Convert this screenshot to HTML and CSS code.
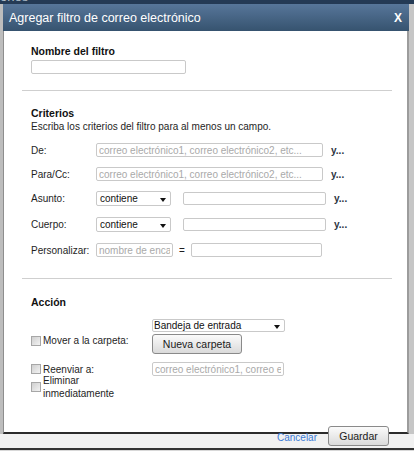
FILE: index.html
```html
<!DOCTYPE html>
<html lang="es">
<head>
<meta charset="utf-8">
<title>Agregar filtro de correo electrónico</title>
<link rel="stylesheet" href="styles.css">
</head>
<body>
<div class="page">
  <div class="topbar"><span class="topbar-text">ones</span></div>
  <div class="middle">
    <div class="side-left"></div>
    <div class="dialog">
      <div class="titlebar">
        <span class="title">Agregar filtro de correo electrónico</span>
        <span class="close">X</span>
      </div>
      <div class="content">
        <section class="section name-section">
          <h2 class="heading">Nombre del filtro</h2>
          <input class="field field-name" type="text">
        </section>
        <div class="sep sep-1"></div>
        <section class="section criteria">
          <h2 class="heading heading-criteria">Criterios</h2>
          <p class="hint">Escriba los criterios del filtro para al menos un campo.</p>
          <div class="row row-de">
            <span class="label">De:</span>
            <input class="field field-wide" type="text" placeholder="correo electrónico1, correo electrónico2, etc...">
            <span class="and">y...</span>
          </div>
          <div class="row row-para">
            <span class="label">Para/Cc:</span>
            <input class="field field-wide" type="text" placeholder="correo electrónico1, correo electrónico2, etc...">
            <span class="and">y...</span>
          </div>
          <div class="row row-sel row-asunto">
            <span class="label">Asunto:</span>
            <div class="select select-small"><span>contiene</span><i class="arrow"></i></div>
            <input class="field field-mid" type="text">
            <span class="and">y...</span>
          </div>
          <div class="row row-sel row-cuerpo">
            <span class="label">Cuerpo:</span>
            <div class="select select-small"><span>contiene</span><i class="arrow"></i></div>
            <input class="field field-mid" type="text">
            <span class="and">y...</span>
          </div>
          <div class="row row-custom">
            <span class="label">Personalizar:</span>
            <input class="field field-header" type="text" placeholder="nombre de encabezado">
            <span class="eq">=</span>
            <input class="field field-value" type="text">
          </div>
        </section>
        <div class="sep sep-2"></div>
        <section class="section action">
          <h2 class="heading heading-action">Acción</h2>
          <div class="arow arow-move">
            <label class="check"><span class="box"></span><span class="check-text">Mover a la carpeta:</span></label>
            <div class="move-controls">
              <div class="select select-folder"><span>Bandeja de entrada</span><i class="arrow"></i></div>
              <button class="btn btn-new" type="button">Nueva carpeta</button>
            </div>
          </div>
          <div class="arow arow-forward">
            <label class="check"><span class="box"></span><span class="check-text">Reenviar a:</span></label>
            <input class="field field-forward" type="text" placeholder="correo electrónico1, correo electrónico2">
          </div>
          <div class="arow arow-delete">
            <label class="check"><span class="box"></span><span class="check-text">Eliminar<br>inmediatamente</span></label>
          </div>
        </section>
      </div>
    </div>
    <div class="side-right"></div>
  </div>
  <div class="footer">
    <a class="cancel" href="#">Cancelar</a>
    <button class="btn btn-save" type="button">Guardar</button>
  </div>
</div>
</body>
</html>
```

FILE: styles.css
```css
* { box-sizing: border-box; }
html, body { margin: 0; padding: 0; }
body {
  font-family: "Liberation Sans", Arial, sans-serif;
  font-size: 10px;
  color: #1e1e1e;
  background: #dadada;
}
.page {
  width: 414px;
  height: 451px;
  overflow: hidden;
  background: #d8d8d8;
}
.topbar {
  height: 4px;
  background: #243a55;
  overflow: hidden;
}
.topbar-text {
  display: block;
  margin-top: -10px;
  font-size: 13px;
  line-height: 13px;
  color: #b4c0cc;
}
.middle {
  display: flex;
  height: 430px;
}
.side-left {
  width: 3px;
  background: #bdbdbd;
}
.dialog {
  width: 406px;
  display: flex;
  flex-direction: column;
}
.titlebar {
  height: 27px;
  flex: none;
  background: linear-gradient(#57769a, #36536f);
  display: flex;
  align-items: center;
  justify-content: space-between;
  padding: 0 7px 0 6px;
  color: #fff;
}
.title { font-size: 12.5px; }
.close { font-weight: bold; font-size: 12px; }
.content {
  flex: 1;
  background: #fff;
  border-left: 1px solid #8e8e8e;
  border-right: 2px solid #9c9c9c;
  border-bottom: 2px solid #2b2b2b;
}
.side-right {
  flex: 1;
  background: #c6c6c6;
}
.section { padding-left: 27px; }
.heading {
  margin: 0;
  font-size: 10.5px;
  line-height: 14px;
  font-weight: bold;
  color: #111;
}
.name-section { padding-top: 13px; }
.field {
  display: block;
  font: inherit;
  font-size: 10px;
  color: #333;
  height: 14px;
  margin: 0;
  padding: 0 2px;
  border: 1px solid #c9c9c9;
  border-radius: 2px;
  background: #fff;
  outline: none;
}
.field::placeholder { color: #a9a9a9; }
.field-name { width: 155px; margin-top: 2px; }
.sep {
  height: 1px;
  width: 370px;
  margin-left: 18px;
  background: #cfcfcf;
}
.sep-1 { margin-top: 16px; }
.sep-2 { margin-top: 21px; }
.heading-criteria { margin-top: 15px; }
.hint {
  margin: 0;
  line-height: 14px;
}
.row {
  display: flex;
  align-items: center;
  height: 14px;
}
.row-de { margin-top: 9px; }
.row-para { margin-top: 10px; }
.row-sel { height: 15px; }
.row-asunto { margin-top: 10px; }
.row-cuerpo { margin-top: 11px; }
.row-custom { margin-top: 11px; }
.label {
  width: 65px;
  flex: none;
}
.field-wide { width: 227px; }
.and {
  margin-left: 8px;
  font-weight: bold;
  color: #2c3440;
  font-size: 10px;
}
.select {
  position: relative;
  display: flex;
  align-items: center;
  background: #fff;
  border: 1px solid #c9c9c9;
  border-radius: 2px;
  color: #111;
}
.select-small {
  width: 75px;
  height: 15px;
  padding-left: 3px;
  margin-right: 12px;
}
.field-mid { width: 143px; height: 13px; }
.arrow {
  position: absolute;
  right: 4px;
  top: 50%;
  margin-top: -1px;
  width: 0;
  height: 0;
  border-left: 3px solid transparent;
  border-right: 3px solid transparent;
  border-top: 4px solid #111;
}
.field-header { width: 77px; }
.eq { width: 18px; padding-left: 6px; }
.field-value { width: 131px; }
.heading-action { margin-top: 16px; }
.arow {
  display: flex;
  align-items: center;
}
.arow-move {
  margin-top: 10px;
  align-items: flex-start;
}
.arow-move .check { padding-top: 15px; }
.check {
  display: flex;
  align-items: center;
  width: 121px;
  flex: none;
}
.box {
  width: 10px;
  height: 10px;
  flex: none;
  margin-right: 2px;
  border: 1px solid #a7a7a7;
  background: linear-gradient(135deg, #cfcfcf, #f3f3f3);
}
.check-text { line-height: 13px; }
.move-controls {
  display: flex;
  flex-direction: column;
  gap: 2px;
}
.select-folder {
  width: 133px;
  height: 13px;
  padding-left: 1px;
}
.btn {
  font: inherit;
  font-size: 10.5px;
  color: #1a1a1a;
  border: 1px solid #8a8a8a;
  border-radius: 3px;
  background: linear-gradient(#fbfbfb, #dadada);
  padding: 0;
  margin: 0;
}
.btn-new {
  width: 90px;
  height: 20px;
}
.arow-forward {
  margin-top: 10px;
  height: 10px;
}
.field-forward { width: 132px; }
.arow-delete { margin-top: 0; }
.footer {
  height: 16px;
  display: flex;
  justify-content: flex-end;
  align-items: flex-start;
  padding-right: 25px;
  background: #f1f1f1;
  border-bottom: 2px solid #333;
}
.cancel {
  color: #3c7bd6;
  text-decoration: none;
  font-size: 10px;
  line-height: 10px;
  margin-top: -1px;
  margin-right: 11px;
}
.btn-save {
  width: 61px;
  height: 20px;
  margin-top: -8px;
}
```
